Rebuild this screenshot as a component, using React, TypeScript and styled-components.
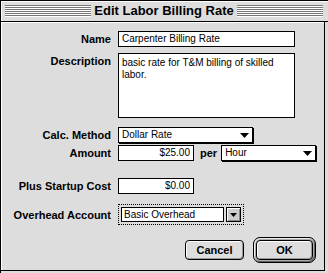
import React from 'react';
import styled, { createGlobalStyle } from 'styled-components';

const GlobalStyle = createGlobalStyle`
  html, body { margin: 0; padding: 0; background: #dddddd; }
  body { width: 328px; height: 273px; overflow: hidden; }
`;

// little black arrow used by the popup menus
const Arrow = ({ small }: { small?: boolean }) => (
  <svg width={small ? 7 : 9} height={small ? 4 : 5} viewBox={small ? '0 0 7 4' : '0 0 9 5'}>
    <polygon points={small ? '0,0 7,0 3.5,4' : '0,0 9,0 4.5,5'} fill="#000" />
  </svg>
);

export default function App() {
  return (
    <>
      <GlobalStyle />
      <Window>
        <TitleBar>
          <Stripes />
          <Title>Edit Labor Billing Rate</Title>
          <Stripes />
        </TitleBar>
        <Content>
          <Row $mt={9}>
            <Label>Name</Label>
            <Field $w={177}>Carpenter Billing Rate</Field>
          </Row>
          <Row $mt={6} $top>
            <Label $pt={2}>Description</Label>
            <TextArea>basic rate for T&amp;M billing of skilled labor.</TextArea>
          </Row>
          <Row $mt={9}>
            <Label>Calc. Method</Label>
            <Popup $w={135}>
              <span>Dollar Rate</span>
              <Arrow />
            </Popup>
          </Row>
          <Row $mt={2}>
            <Label>Amount</Label>
            <Field $w={76} $right>$25.00</Field>
            <Per>per</Per>
            <Popup $w={95}>
              <span>Hour</span>
              <Arrow />
            </Popup>
          </Row>
          <Row $mt={17}>
            <Label>Plus Startup Cost</Label>
            <Field $w={76} $right>$0.00</Field>
          </Row>
          <Row $mt={10}>
            <Label>Overhead Account</Label>
            <FocusRing>
              <ComboField>Basic Overhead</ComboField>
              <ComboButton>
                <Arrow small />
              </ComboButton>
            </FocusRing>
          </Row>
          <ButtonRow>
            <Button>Cancel</Button>
            <DefaultRing>
              <Button $w={57}>OK</Button>
            </DefaultRing>
          </ButtonRow>
        </Content>
      </Window>
    </>
  );
}

const Window = styled.div`
  width: 328px;
  height: 273px;
  box-sizing: border-box;
  background: #dddddd;
  border-top: 1px solid #000;
  border-left: 1px solid #000;
  display: flex;
  flex-direction: column;
  font-family: "Liberation Sans", Arial, sans-serif;
  color: #000;
`;

const TitleBar = styled.div`
  height: 21px;
  box-sizing: border-box;
  border-bottom: 1px solid #000;
  display: flex;
  align-items: center;
  padding: 0 5px 0 4px;
  background: #dddddd;
  box-shadow: inset 1px 1px 0 #fff;
`;

const Stripes = styled.div`
  flex: 1;
  height: 12px;
  background: repeating-linear-gradient(to bottom, #777 0 1px, #fff 1px 2px);
`;

const Title = styled.div`
  font-size: 13px;
  font-weight: 700;
  padding: 0 3px;
  line-height: 16px;
  white-space: nowrap;
`;

const Content = styled.div`
  flex: 1;
  margin: 0 3px 2px 0;
  border-right: 1px solid #000;
  border-bottom: 1px solid #000;
  box-shadow: inset 1px 1px 0 #fff;
  display: flex;
  flex-direction: column;
`;

const Row = styled.div<{ $mt: number; $top?: boolean }>`
  display: flex;
  align-items: ${(p) => (p.$top ? 'flex-start' : 'center')};
  margin-top: ${(p) => p.$mt}px;
`;

const Label = styled.div<{ $pt?: number }>`
  width: 110px;
  margin-right: 7px;
  text-align: right;
  font-size: 11px;
  font-weight: 700;
  white-space: nowrap;
  padding-top: ${(p) => p.$pt || 0}px;
`;

const Field = styled.div<{ $w: number; $right?: boolean }>`
  width: ${(p) => p.$w}px;
  height: 16px;
  box-sizing: border-box;
  border: 1px solid #000;
  background: #fff;
  font-size: 10px;
  line-height: 14px;
  padding: 0 3px;
  text-align: ${(p) => (p.$right ? 'right' : 'left')};
  white-space: nowrap;
`;

const TextArea = styled.div`
  width: 177px;
  height: 65px;
  box-sizing: border-box;
  border: 1px solid #000;
  background: #fff;
  font-size: 10px;
  line-height: 12px;
  padding: 3px 3px;
`;

const Popup = styled.div<{ $w: number }>`
  width: ${(p) => p.$w}px;
  height: 16px;
  box-sizing: border-box;
  border: 1px solid #000;
  box-shadow: 1px 1px 0 #000;
  background: #fff;
  font-size: 10px;
  line-height: 14px;
  padding: 0 3px 0 3px;
  display: flex;
  align-items: center;
  justify-content: space-between;
`;

const Per = styled.div`
  font-size: 11px;
  font-weight: 700;
  margin: 0 4px 0 6px;
`;

const FocusRing = styled.div`
  display: flex;
  gap: 2px;
  padding: 2px;
  border: 1px dotted #000;
`;

const ComboField = styled.div`
  width: 103px;
  height: 15px;
  box-sizing: border-box;
  border: 1px solid #000;
  background: #fff;
  font-size: 10px;
  line-height: 13px;
  padding: 0 2px;
`;

const ComboButton = styled.div`
  width: 15px;
  height: 15px;
  box-sizing: border-box;
  border: 1px solid #000;
  background: #ccc;
  box-shadow: inset 1px 1px 0 #fff, inset -1px -1px 0 #888;
  display: flex;
  align-items: center;
  justify-content: center;
`;

const ButtonRow = styled.div`
  display: flex;
  align-items: center;
  justify-content: flex-end;
  gap: 9px;
  margin-top: 12px;
  padding-right: 8px;
`;

const Button = styled.div<{ $w?: number }>`
  width: ${(p) => p.$w || 59}px;
  height: 20px;
  box-sizing: border-box;
  border: 1px solid #000;
  border-radius: 4px;
  background: #dddddd;
  box-shadow: inset 1px 1px 0 #fff, inset -1px -1px 0 #999;
  font-size: 11px;
  font-weight: 700;
  display: flex;
  align-items: center;
  justify-content: center;
`;

const DefaultRing = styled.div`
  padding: 2px;
  border: 1px solid #000;
  border-radius: 7px;
  background: #aaa;
  box-shadow: inset 1px 1px 0 #eee, inset -1px -1px 0 #666;
`;
